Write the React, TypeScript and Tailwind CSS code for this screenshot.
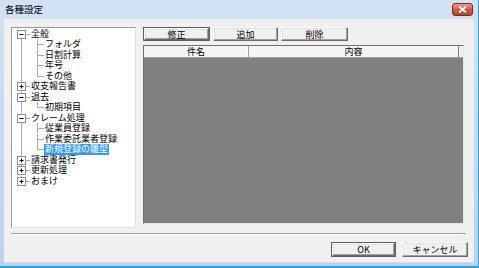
import React from "react";

type Row = { t: string; l: 0 | 1; box?: "+" | "-"; last?: boolean; sel?: boolean };

const rows: Row[] = [
  { t: "全般", l: 0, box: "-" },
  { t: "フォルダ", l: 1 },
  { t: "日割計算", l: 1 },
  { t: "年号", l: 1 },
  { t: "その他", l: 1, last: true },
  { t: "収支報告書", l: 0, box: "+" },
  { t: "退去", l: 0, box: "-" },
  { t: "初期項目", l: 1, last: true },
  { t: "クレーム処理", l: 0, box: "-" },
  { t: "従業員登録", l: 1 },
  { t: "作業委託業者登録", l: 1 },
  { t: "新規登録の雛型", l: 1, last: true, sel: true },
  { t: "請求書発行", l: 0, box: "+" },
  { t: "更新処理", l: 0, box: "+" },
  { t: "おまけ", l: 0, box: "+" },
];

const LINE = "#a9a9a9";

function RootCell({ idx, row }: { idx: number; row: Row }) {
  const first = idx === 0;
  const last = idx === rows.length - 1;
  const h = 10.5;
  const c = 5.25;
  const y1 = first ? c : 0;
  const y2 = last ? c : h;
  return (
    <svg width="18" height={h} viewBox={`0 0 18 ${h}`} className="shrink-0 block">
      <line x1="9.5" y1={y1} x2="9.5" y2={y2} stroke={LINE} strokeWidth="1" />
      {row.l === 0 && (
        <>
          <line x1="13" y1="5.5" x2="18" y2="5.5" stroke={LINE} strokeWidth="1" />
          <rect x="5.5" y="1.5" width="8" height="8" fill="#fff" stroke="#8f8f8f" strokeWidth="1" />
          <line x1="7.5" y1="5.5" x2="11.5" y2="5.5" stroke="#000" strokeWidth="1" />
          {row.box === "+" && (
            <line x1="9.5" y1="3.5" x2="9.5" y2="7.5" stroke="#000" strokeWidth="1" />
          )}
        </>
      )}
    </svg>
  );
}

function ChildCell({ row }: { row: Row }) {
  const h = 10.5;
  return (
    <svg width="14" height={h} viewBox={`0 0 14 ${h}`} className="shrink-0 block">
      <line x1="7.5" y1="0" x2="7.5" y2={row.last ? 5.5 : h} stroke={LINE} strokeWidth="1" />
      <line x1="7.5" y1="5.5" x2="14" y2="5.5" stroke={LINE} strokeWidth="1" />
    </svg>
  );
}

function Btn({ label, def, w }: { label: string; def?: boolean; w: string }) {
  return (
    <div
      className={`${w} flex items-center justify-center bg-[#f0f0f0] text-[9px] leading-none text-black ${
        def ? "border border-[#5e5e5e]" : ""
      }`}
    >
      <div className="w-full h-full flex items-center justify-center border-t border-l border-t-white border-l-white border-r border-b border-r-[#6b6b6b] border-b-[#6b6b6b] shadow-[inset_-1px_-1px_0_#a0a0a0,inset_1px_1px_0_#e3e3e3]">
        {label}
      </div>
    </div>
  );
}

export default function App() {
  return (
    <div className="w-[479px] h-[268px] flex flex-col bg-[linear-gradient(#d2e2f4,#bcd1ea)] border-r border-b-2 border-r-[#2aa3da] border-b-[#2aa3da] font-['Noto_Sans_CJK_JP','Noto_Sans_CJK_SC',sans-serif] text-black overflow-hidden">
      {/* title bar */}
      <div className="h-[19px] shrink-0 flex items-center pl-[5px] pr-[5px] relative">
        <span className="text-[9.5px] leading-none">各種設定</span>
        <div className="ml-auto w-[21px] h-[13px] rounded-[3px] border border-[#7a2a22] bg-[linear-gradient(#e8a090,#cc5a48_50%,#b8432f)] flex items-center justify-center">
          <svg width="9" height="7" viewBox="0 0 9 7">
            <path d="M1 0.5 L8 6.5 M8 0.5 L1 6.5" stroke="#fff" strokeWidth="1.8" />
          </svg>
        </div>
      </div>
      {/* body */}
      <div className="ml-[4px] mr-[4px] mb-[3px] flex-1 bg-[#f0f0f0] border-r border-b border-r-[#e8eef5] border-b-[#d8dde3] flex flex-col pl-[7px] pt-[8px]">
        <div className="flex gap-[7px]">
          {/* tree */}
          <div className="w-[125px] h-[201px] bg-white border border-t-[#9c9c9c] border-l-[#9c9c9c] border-r-[#e3e3e3] border-b-[#e3e3e3] pt-[0.5px]">
            {rows.map((r, i) => (
              <div key={i} className="flex items-center h-[10.5px]">
                <RootCell idx={i} row={r} />
                {r.l === 1 && <ChildCell row={r} />}
                <span
                  className={`text-[9px] leading-[10.5px] whitespace-nowrap px-[1px] ${
                    r.sel ? "bg-[#3399ff] text-white" : ""
                  }`}
                >
                  {r.t}
                </span>
              </div>
            ))}
          </div>
          {/* right */}
          <div className="w-[321px] flex flex-col">
            <div className="flex h-[14px] gap-[3px]">
              <Btn label="修正" def w="w-[67px]" />
              <Btn label="追加" w="w-[65px]" />
              <Btn label="削除" w="w-[67px]" />
            </div>
            <div className="mt-[4px] h-[179px] bg-[#808080] border border-t-[#6f6f6f] border-l-[#6f6f6f] border-r-[#e8e8e8] border-b-[#e8e8e8] flex flex-col">
              <div className="h-[12px] flex bg-[#f5f5f5] border-b border-b-[#a0a0a0] text-[9px] leading-none">
                <div className="w-[105px] flex items-center justify-center border-r border-r-[#a0a0a0] shadow-[inset_-1px_0_0_#fff]">
                  件名
                </div>
                <div className="w-[210px] flex items-center justify-center border-r border-r-[#808080]">
                  内容
                </div>
                <div className="flex-1 bg-[#f0f0f0]" />
              </div>
            </div>
          </div>
        </div>
        {/* separator */}
        <div className="mt-[5px] w-[455px] h-[2px] border-t border-t-[#a0a0a0] border-b border-b-white" />
        {/* bottom buttons */}
        <div className="mt-[7px] flex justify-end gap-[6px] pr-[5px] h-[15px]">
          <Btn label="OK" def w="w-[65px]" />
          <Btn label="キャンセル" w="w-[66px]" />
        </div>
      </div>
    </div>
  );
}
